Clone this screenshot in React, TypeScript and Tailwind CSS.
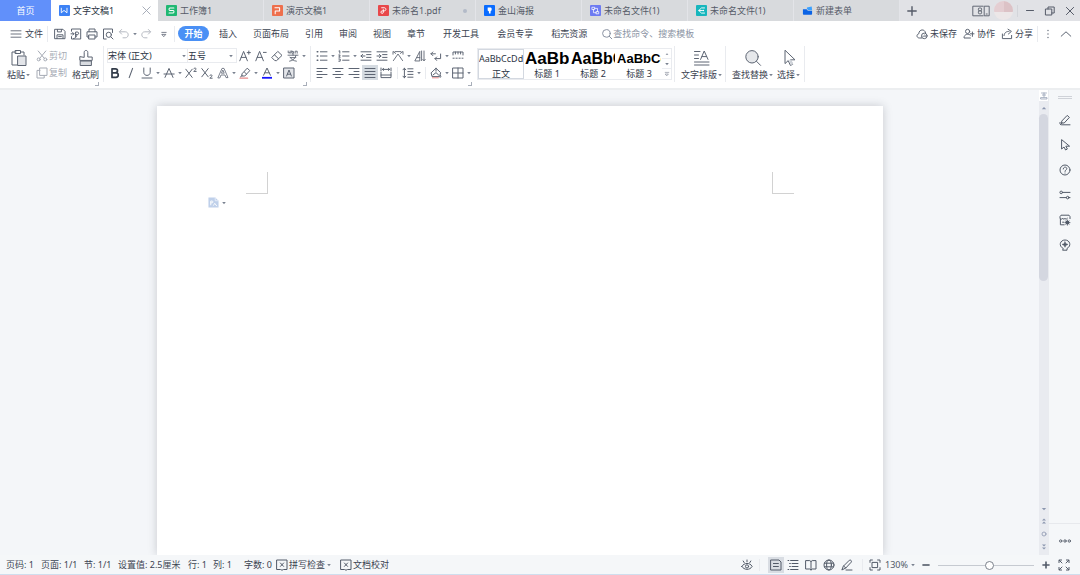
import React, { useState } from 'react';

type IconProps = { children: React.ReactNode; className?: string; box?: number };

function Icon({ children, className = 'size-3', box = 12 }: IconProps) {
  return (
    <svg
      aria-hidden="true"
      viewBox={`0 0 ${box} ${box}`}
      className={`shrink-0 ${className}`}
      fill="none"
      stroke="currentColor"
      strokeWidth="1"
      strokeLinecap="round"
      strokeLinejoin="round"
    >
      {children}
    </svg>
  );
}

function Caret() {
  return (
    <svg aria-hidden="true" viewBox="0 0 6 6" className="size-[6px] shrink-0 text-[#7a8290]">
      <path d="M1.2 2h3.6L3 4.2z" fill="currentColor" />
    </svg>
  );
}

function Divider({ className = 'h-4' }: { className?: string }) {
  return <span aria-hidden="true" className={`w-px shrink-0 bg-[#e9ebef] ${className}`} />;
}

/* ---------- title bar ---------- */

const tabs = [
  {
    name: '文字文稿1',
    icon: (
      <>
        <rect width="12" height="12" rx="1" fill="#3d82f5" stroke="none" />
        <path d="M2.5 3.5v5l3-2.6 3.2 2.6v-5" stroke="#fff" />
      </>
    ),
  },
  {
    name: '工作簿1',
    icon: (
      <>
        <rect width="12" height="12" rx="1" fill="#1fb873" stroke="none" />
        <path d="M8.6 3.2H4.2c-1.2 0-1.2 2.7 0 2.7h3.6c1.2 0 1.2 2.8 0 2.8H3.3" stroke="#fff" strokeWidth="1.1" />
      </>
    ),
  },
  {
    name: '演示文稿1',
    icon: (
      <>
        <rect width="12" height="12" rx="1" fill="#ee6f4c" stroke="none" />
        <path d="M3.5 9.5v-3h4.8V3H3.2" stroke="#fff" strokeWidth="1.1" />
      </>
    ),
  },
  {
    name: '未命名1.pdf',
    icon: (
      <>
        <rect width="12" height="12" rx="1" fill="#e8484a" stroke="none" />
        <path d="M4 3h2.8c2.4 0 2.4 3.4 0 3.4H4.6c-1.9 0-1.9 2.8 0 2.8.9 0 1.2-.6 1.2-1.4V5" stroke="#fff" />
      </>
    ),
  },
  {
    name: '金山海报',
    icon: (
      <>
        <rect width="12" height="12" rx="1" fill="#0a6cff" stroke="none" />
        <path d="M4 2.6h3.2c1.6 0 1.6 3.6 0 4.2v2.6H5.4V7.2L4 6z" fill="#fff" stroke="none" />
      </>
    ),
  },
  {
    name: '未命名文件(1)',
    icon: (
      <>
        <rect width="12" height="12" rx="1" fill="#6d7bf2" stroke="none" />
        <path d="M2.5 2.5h2.6v2.4H2.5zM6.9 7.2h2.6v2.4H6.9zM3.8 4.9v3.5h3.1M5.1 3.7h3.1v3.5" stroke="#fff" strokeWidth="0.8" />
      </>
    ),
  },
  {
    name: '未命名文件(1)',
    icon: (
      <>
        <rect width="12" height="12" rx="1" fill="#17b6bd" stroke="none" />
        <path d="M9.3 3.2H6L3 6l3 2.8h3.3M3 6h4" stroke="#fff" />
        <circle cx="8" cy="6" r=".9" fill="#fff" stroke="none" />
      </>
    ),
  },
  {
    name: '新建表单',
    icon: (
      <>
        <path d="M1 4.6h4l1.4 1.6H11v3.6a.9.9 0 0 1-.9.9H1.9a.9.9 0 0 1-.9-.9z" fill="#0b63e5" stroke="none" />
        <path d="M5.4 2.6 10.6 1.6l.4 4H6.8L5.4 4z" fill="#3aa0ff" stroke="none" />
      </>
    ),
  },
];

function TitleBar() {
  return (
    <header className="flex h-[21px] shrink-0 items-stretch bg-[#e1e2e6] text-[#555b68]">
      <button className="w-[51px] shrink-0 bg-[#6190fa] text-white">首页</button>
      <nav aria-label="文档标签" className="flex min-w-0">
        {tabs.map((tab, i) => (
          <div
            key={i}
            className={
              i === 0
                ? 'flex w-[107px] items-center bg-white pr-[6px] pl-2 text-[#2c3444]'
                : 'flex w-[106px] items-center border-r border-[#e3e4e8] bg-[#d8dadd] pr-1 pl-2'
            }
          >
            <button className="flex min-w-0 flex-1 items-center gap-[3px] whitespace-nowrap">
              <Icon className="size-[11px]">{tab.icon}</Icon>
              {tab.name}
            </button>
            {i === 0 && (
              <button aria-label="关闭标签" className="text-[#a0a6b4]">
                <Icon className="size-[11px]">
                  <path d="M2 2l8 8M10 2l-8 8" />
                </Icon>
              </button>
            )}
            {i === 3 && <span className="mr-1 size-1 rounded-full bg-[#b3bac8]" />}
          </div>
        ))}
      </nav>
      <button aria-label="新建标签" className="w-6 shrink-0 pl-[6px]">
        <Icon>
          <path d="M6 1.8v8.4M1.8 6h8.4" strokeWidth="1.4" />
        </Icon>
      </button>
      <div className="ml-auto flex shrink-0 items-center pr-1">
        <button aria-label="切换窗口" className="mr-1">
          <svg aria-hidden="true" viewBox="0 0 18 12" className="h-3 w-[18px]" fill="none" stroke="currentColor" strokeWidth="0.9">
            <path d="M11.5 1.2H.8v9.6h10.7M12.2 1.2h5v9.6h-5zM13.8 9h1.8" />
            <rect x="6.4" y="3" width="3.2" height="2.8" rx="1" />
            <rect x="6.4" y="5.8" width="3.2" height="3" rx="1" />
          </svg>
        </button>
        <button aria-label="账户" className="size-[19px] overflow-hidden rounded-full bg-[#e9e4e6]">
          <span className="flex h-[11px] w-full">
            <span className="w-1/2 bg-[#e4ced2]" />
            <span className="w-1/2 bg-[#dcc2c6]" />
          </span>
          <span className="block h-2 w-full bg-[#ece7e8]" />
        </button>
        <span className="ml-1 h-3 w-px bg-[#d3d5da]" />
        <div className="ml-[6px] flex gap-2">
          <button aria-label="最小化">
            <Icon><path d="M2.5 5.5h7" /></Icon>
          </button>
          <button aria-label="还原">
            <Icon><path d="M1.8 4h6v6h-6zM4 4V2h6.2v6H7.8" /></Icon>
          </button>
          <button aria-label="关闭">
            <Icon><path d="M2.4 2.4l7.2 7.2M9.6 2.4L2.4 9.6" /></Icon>
          </button>
        </div>
      </div>
    </header>
  );
}

/* ---------- menu row ---------- */

const menus = ['插入', '页面布局', '引用', '审阅', '视图', '章节'];
const extraMenus = ['开发工具', '会员专享', '稻壳资源'];

function MenuRow() {
  return (
    <div className="flex h-[25px] shrink-0 items-center bg-white pr-2 pl-[10px] whitespace-nowrap">
      <button className="flex items-center gap-[3px]">
        <Icon className="size-3 text-[#5d6573]">
          <path d="M1 2.8h10M1 6h10M1 9.2h10" strokeWidth="0.9" />
        </Icon>
        文件
      </button>
      <Divider className="ml-1 h-4" />
      <div className="ml-1 flex text-[#5d6573]">
        <button aria-label="保存" className="flex w-4 justify-center">
          <Icon><path d="M1 1.3h8L11 3.4v7.3H1zM3.4 1.5v2.4h4V1.5M3 10.5V6.8h6v3.7M4.6 8.6h2.8" /></Icon>
        </button>
        <button aria-label="输出为PDF" className="flex w-4 justify-center">
          <Icon><path d="M1.5 3.2V1h9.2v10H1.5V8.6M1 5.8h2.8M2.7 4.5L4 5.8 2.7 7.1M5.6 8.8V4h1.7c1.8 0 1.8 2.6 0 2.6H5.8M3.5 10.6c1.8-.3 3-1.5 3.3-3" /></Icon>
        </button>
        <button aria-label="打印" className="flex w-4 justify-center">
          <Icon><path d="M3 3.8V1h6v2.8M3 9H1V3.8h10V9H9M3 7h6v4H3z" /></Icon>
        </button>
        <button aria-label="打印预览" className="flex w-4 justify-center">
          <Icon><path d="M4.2 11H1.5V1h9v3.5" /><circle cx="6.8" cy="6.8" r="2.6" /><path d="M8.8 8.8l2.2 2.2" /></Icon>
        </button>
        <button aria-label="撤销" className="flex w-4 justify-center text-[#b6bac2]">
          <Icon><path d="M3.6 1.5L1.4 3.8l2.2 2.3M1.6 3.8h5.6c4 0 4 6 0 6H5" /></Icon>
        </button>
        <button aria-label="撤销列表" className="flex w-[6px] items-center"><Caret /></button>
        <button aria-label="恢复" className="flex w-4 justify-center text-[#b6bac2]">
          <Icon><path d="M8.4 1.5l2.2 2.3-2.2 2.3M10.4 3.8H4.8c-4 0-4 6 0 6H7" /></Icon>
        </button>
        <button aria-label="自定义快速访问" className="flex w-5 justify-center">
          <Icon><path d="M3.8 4.4h4.4M4.2 6.4h3.6L6 8.4z" strokeWidth="0.8" /></Icon>
        </button>
      </div>
      <Divider className="mr-[3px] h-4" />
      <button className="h-[15px] w-[31px] rounded-full bg-[#4a90f5] font-bold text-white">开始</button>
      <nav aria-label="功能区" className="ml-[10px] flex gap-4">
        {menus.map((m) => <button key={m}>{m}</button>)}
        {extraMenus.map((m) => <button key={m} className="ml-[2px]">{m}</button>)}
      </nav>
      <label className="ml-[14px] flex items-center text-[#8b93a3]">
        <Icon className="size-3"><circle cx="5.4" cy="5.4" r="3.8" /><path d="M8.2 8.2l2.6 2.6" /></Icon>
        <input aria-label="查找命令" placeholder="查找命令、搜索模板" className="w-24 bg-transparent outline-none placeholder:text-[#8b93a3]" />
      </label>
      <div className="ml-auto flex items-center gap-[6px]">
        <button className="flex items-center gap-[2px]">
          <Icon className="size-3 text-[#5d6573]"><path d="M5.6 10H3.4C.4 10 .2 6.2 2.8 5.8 3 .8 9 .8 9.5 4.6" /><circle cx="8.3" cy="7.9" r="2.8" /><path d="M6.8 8.2h3L8.6 7" strokeWidth="0.8" /></Icon>
          未保存
        </button>
        <button className="flex items-center gap-[2px]">
          <Icon className="size-3 text-[#5d6573]"><circle cx="4.6" cy="3.4" r="2.1" /><path d="M7.4 10H1c0-4.3 5-4.6 6.3-2.8M9.4 4v4.4M7.4 5.8h3.6" /></Icon>
          协作
        </button>
        <button className="flex items-center gap-[2px]">
          <Icon className="size-3 text-[#5d6573]"><path d="M1.4 6v4.6h9.2V7.4M3 7.6c.4-3.2 2.4-4.2 5-4.2M7 1.2l3.4 2.2L7.4 6" /></Icon>
          分享
        </button>
      </div>
      <Divider className="ml-1 h-4" />
      <button aria-label="更多" className="ml-1 text-[#5d6573]">
        <Icon><path d="M6 2.5v.1M6 6v.1M6 9.5v.1" strokeWidth="1.3" /></Icon>
      </button>
      <button aria-label="收起功能区" className="ml-[6px] text-[#5d6573]">
        <Icon><path d="M1.2 8.2L6 3.8l4.8 4.4" /></Icon>
      </button>
    </div>
  );
}

/* ---------- ribbon ---------- */

function Tool({ label, active, children }: { label: string; active?: boolean; children: React.ReactNode }) {
  return (
    <button
      aria-label={label}
      className={`flex h-[15px] w-4 shrink-0 items-center justify-center ${active ? 'bg-[#d5dbe1]' : ''}`}
    >
      <Icon>{children}</Icon>
    </button>
  );
}

function Drop({ label }: { label: string }) {
  return (
    <button aria-label={label} className="flex h-[15px] w-[6px] shrink-0 items-center">
      <Caret />
    </button>
  );
}

function Gap() {
  return (
    <span className="flex w-[6px] shrink-0 justify-center">
      <Divider className="h-3" />
    </span>
  );
}

function Corner({ label }: { label: string }) {
  return (
    <button aria-label={label} className="-ml-1 flex items-end self-end pb-[2px]">
      <span className="size-1 border-r border-b border-[#a8aeb9]" />
    </button>
  );
}

function BigTool({ label, caret, children }: { label: string; caret?: boolean; children: React.ReactNode }) {
  return (
    <button className="flex flex-col items-center gap-[3px] whitespace-nowrap">
      <Icon className="size-[18px] text-[#5d6573]" box={18}>{children}</Icon>
      <span className="flex items-center leading-[10px]">
        {label}
        {caret && <Caret />}
      </span>
    </button>
  );
}

const styles = [
  { name: '正文', sample: 'AaBbCcDd', look: 'text-[9px] justify-center' },
  { name: '标题 1', sample: 'AaBb', look: 'text-[17px] font-bold font-["Liberation_Sans",sans-serif] text-black' },
  { name: '标题 2', sample: 'AaBbC', look: 'text-[16px] font-bold font-["Liberation_Sans",sans-serif] text-black' },
  { name: '标题 3', sample: 'AaBbCc', look: 'text-[13px] font-bold font-["Liberation_Sans",sans-serif] text-black' },
];

function Ribbon() {
  return (
    <div className="flex h-[42px] shrink-0 bg-white text-[#5d6573]">
      <div className="flex items-start pt-[3px] pl-[7px] text-[#3b4351]">
        <BigTool label="粘贴" caret>
          <path d="M6 3H2v13h5M11 3h3v3M5.5 1.5h5v3h-5z" />
          <path d="M8 7h8v9.5H8z" fill="#e3e5e9" />
        </BigTool>
        <div className="ml-[5px] flex flex-col gap-[3px] text-[#a6abb5]">
          <button className="flex h-[14px] items-center gap-px">
            <Icon><path d="M2.2 1l6 7.2M9.8 1l-6 7.2" /><circle cx="2.7" cy="9.4" r="1.5" /><circle cx="9.3" cy="9.4" r="1.5" /></Icon>
            剪切
          </button>
          <button className="flex h-[14px] items-center gap-px">
            <Icon><path d="M4 1h7v7.4H4zM4 3.4H1V11h7.2V8.4" /></Icon>
            复制
          </button>
        </div>
        <div className="ml-[5px]">
          <BigTool label="格式刷">
            <path d="M3.6 12h10.8v4.5H3.6z" fill="#d9dce1" />
            <path d="M7.2 8V3.4c0-2.6 3.6-2.6 3.6 0V8h4.4v3.4H2.8V8z" />
          </BigTool>
        </div>
      </div>
      <Corner label="剪贴板设置" />
      <Divider className="ml-1 h-9" />

      <div className="flex flex-col gap-[2px] pt-[2px] pl-[3px]">
        <div className="flex items-center">
          <div className="flex h-[15px] border border-[#e9ebef] text-[#2c3444]">
            <span className="flex w-20 items-center border-r border-[#e9ebef]">
              <select aria-label="字体" className="w-[73px] appearance-none bg-transparent outline-none">
                <option>宋体 (正文)</option>
              </select>
              <Caret />
            </span>
            <span className="flex w-12 items-center">
              <select aria-label="字号" className="w-10 appearance-none bg-transparent outline-none">
                <option>五号</option>
              </select>
              <Caret />
            </span>
          </div>
          <Tool label="增大字号"><path d="M.8 10.8L4.6 1.4l3.8 9.4M2.2 7.4H7M8.2 2.6h3.2M9.8 1v3.2" /></Tool>
          <Tool label="减小字号"><path d="M.8 10.8L4.6 1.4l3.8 9.4M2.2 7.4H7M8.4 2.4h2.8" /></Tool>
          <Tool label="清除格式"><path d="M1 7.2L6.8 1.4l4.2 4-5.4 5.2H4.2zM3.4 4.8l4.4 4.2" /></Tool>
          <Tool label="拼音指南"><path d="M1.200 1v1.800h2V1M3.200 2.800v.4M4.800.8v2.400h1.800V1.600H4.800M8.200 3.200V1.200h2v2M1 5.200h10M6 3.800v1.400M3 7.200c1 2 3.400 3.600 6.400 4M9 5.400c-.6 3-3 5.200-6.400 5.800M3.400 7.600h5.400" strokeWidth="0.9" /></Tool>
          <Drop label="拼音选项" />
        </div>
        <div className="flex items-center">
          <Tool label="加粗"><path d="M3 1.800h3.400c2.800 0 2.800 4 0 4H3zM3 5.800h4c3 0 3 4.600 0 4.600H3z" strokeWidth="1.700" stroke="#333c4a" /></Tool>
          <Tool label="倾斜"><path d="M7.600 1.400L4.200 10.600" strokeWidth="1.100" /></Tool>
          <Tool label="下划线"><path d="M2.800 1v4.400c0 4 6.400 4 6.400 0V1M1 11h10" /></Tool>
          <Drop label="下划线选项" />
          <Tool label="删除线"><path d="M2 10.400L6 1.400l4 9M1 7h10.200" /></Tool>
          <Drop label="删除线选项" />
          <Tool label="上标"><path d="M.8 2.200l6.400 8.200M7.200 2.200L.8 10.400M8.800 1.800c.4-1.200 2.400-1 2.200.3-.1.8-1.600 1.500-2.200 2.300h2.400" /></Tool>
          <Tool label="下标"><path d="M.8 1.600l6.400 8.200M7.200 1.600L.8 9.800M8.800 8.600c.4-1.200 2.400-1 2.200.3-.1.8-1.600 1.500-2.200 2.300h2.400" /></Tool>
          <Tool label="文字效果"><path d="M1 10.600L5 1.400h2l4 9.200H9L8 8H4l-1 2.600zM4.800 6.200h2.400L6 3.400z" strokeWidth="0.8" /></Tool>
          <Drop label="文字效果选项" />
          <Tool label="突出显示"><path d="M3.200 6.600L8.200 1.200l2.600 2.400L5.800 9H3.200zM3.200 8.600L1.400 10M5.400 5l2.200 2.200" /><path d="M1 11.200h7.600" stroke="#e58a8a" strokeWidth="1.200" /></Tool>
          <Drop label="突出显示颜色" />
          <Tool label="字体颜色"><path d="M2.600 8.200L6 1l3.400 7.200M3.800 5.800h4.400" /><path d="M1 10.800h10" stroke="#1414ff" strokeWidth="1.800" strokeLinecap="butt" /></Tool>
          <Drop label="字体颜色选项" />
          <Tool label="字符底纹"><rect x="1" y="1" width="10" height="10" fill="#e3e5e9" /><path d="M3.600 9L6 3l2.400 6M4.400 7.200h3.200" /></Tool>
        </div>
      </div>
      <Corner label="字体设置" />
      <Divider className="ml-[3px] h-9" />

      <div className="flex flex-col gap-[2px] pt-[2px] pl-[3px]">
        <div className="flex">
          <Tool label="项目符号"><path d="M1.200 1.800h.6M1.200 6h.6M1.200 10.200h.6" strokeWidth="1.500" /><path d="M4.400 1.800H11M4.400 6H11M4.400 10.200H11" /></Tool>
          <Drop label="项目符号选项" />
          <Tool label="编号"><path d="M1 1l.8-.2v2.400M.8 5h1.400L.8 7.200h1.400M.8 9h1.400v2.200H.8M4.600 1.800H11M4.600 6H11M4.600 10.200H11" /></Tool>
          <Drop label="编号选项" />
          <Tool label="减少缩进"><path d="M1 1.800h10M6.600 4.600H11M6.600 7.400H11M1 10.200h10M1 6h4M2.600 4.400L1 6l1.600 1.600" /></Tool>
          <Tool label="增加缩进"><path d="M1 1.800h10M6.600 4.600H11M6.600 7.400H11M1 10.200h10M1 6h4M3.400 4.400L5 6 3.400 7.600" /></Tool>
          <Tool label="中文版式"><path d="M3 1.600h6M1.400 10.600L6 4l4.600 6.600M1 4.200V1.400l2.600 2M11 4.200V1.400l-2.600 2" strokeWidth="0.9" /></Tool>
          <Drop label="中文版式选项" />
          <Tool label="排序"><path d="M1 10.600L5.800 1.400v9.200zM3 7.600h2.800M7.600 1v9.600M10 1v9.600M8.800 9.400l1.200 1.400 1.200-1.400" strokeWidth="0.9" /></Tool>
          <Tool label="显示标记"><path d="M1 3.800h4.400M2.800 2L1 3.800l1.800 1.800M10.600 4v4.600H5M6.600 7L5 8.600l1.600 1.800" /></Tool>
          <Drop label="显示标记选项" />
          <Tool label="制表位"><path d="M1 5V2h10v3M3.400 2v2M6 2v2M8.600 2v2M1 8.200h1.200M4 8.200h1.200M7 8.200h1.200M10 8.200h1" /></Tool>
        </div>
        <div className="flex items-center">
          <Tool label="左对齐"><path d="M1 1.500h10M1 4.500h5M1 7.500h10M1 10.500h5" /></Tool>
          <Tool label="居中"><path d="M1 1.500h10M3.600 4.500h4.800M1 7.500h10M3.600 10.500h4.800" /></Tool>
          <Tool label="右对齐"><path d="M1 1.500h10M6 4.500h5M1 7.500h10M6 10.500h5" /></Tool>
          <Tool label="两端对齐" active><path d="M1 1.500h10M1 4.500h10M1 7.500h10M1 10.500h10" /></Tool>
          <Tool label="分散对齐"><path d="M1 1v3M11 1v3M2.400 2.400h7.200M3.600 1.400l-1.200 1 1.200 1M8.400 1.400l1.200 1-1.200 1M1 5.400v5.200h10V5.400M1 8h10" /></Tool>
          <Gap />
          <Tool label="行距"><path d="M2.400 1.200v9.600M1 2.800l1.400-1.600 1.400 1.600M1 9.200l1.400 1.600 1.400-1.600M5.800 1.800H11M5.800 4.600H11M5.800 7.400H11M5.800 10.200H11" /></Tool>
          <Drop label="行距选项" />
          <Gap />
          <Tool label="底纹颜色"><path d="M1.400 5.600L6 1.200l4.600 4.400-1 4H2.400zM6 1.200v3M10.400 8.400c.8 1.200.6 2-.2 2" /><path d="M3 8l3-2.400L8.600 8" /><path d="M2.400 10.800h6" stroke="#e58a8a" /></Tool>
          <Drop label="底纹颜色选项" />
          <Tool label="边框"><path d="M1 1h10v10H1zM6 1v10M1 6h10" /></Tool>
          <Drop label="边框选项" />
        </div>
      </div>
      <Corner label="段落设置" />

      <div className="mt-[2px] ml-[5px] flex h-8 border border-[#e9ebef]">
        {styles.map((s, i) => (
          <button
            key={s.name}
            className={`flex w-[46px] flex-col overflow-hidden text-[#2c3444] ${i === 0 ? 'outline outline-1 -outline-offset-1 outline-[#d3d8e0]' : 'px-px'}`}
          >
            <span className={`flex h-5 w-full items-center overflow-hidden leading-5 ${s.look}`}>{s.sample}</span>
            <span className="w-full text-center leading-[10px]">{s.name}</span>
          </button>
        ))}
        <div className="flex w-[9px] flex-col text-[#7a8290]">
          <button aria-label="上一行" className="flex h-[10px] items-center justify-center border-b border-[#eceef2]">
            <Icon className="size-[6px]" box={6}><path d="M1.600 3.800L3 2.200l1.400 1.600z" fill="currentColor" stroke="none" /></Icon>
          </button>
          <button aria-label="下一行" className="flex h-[10px] items-center justify-center border-b border-[#eceef2]">
            <Caret />
          </button>
          <button aria-label="更多样式" className="flex h-[10px] items-center justify-center">
            <Icon className="size-[6px]" box={6}><path d="M1.200 1.400h3.600M1.600 3h2.800L3 4.600z" strokeWidth="0.6" /></Icon>
          </button>
        </div>
      </div>

      <Divider className="ml-[2px] h-9" />
      <div className="flex items-start pt-[3px] pl-[6px] text-[#3b4351]">
        <BigTool label="文字排版" caret>
          <path d="M1.500 2.500h5.500M1.500 6h4M1.500 9.500h4M1.500 13h14.500M1.500 16h14.500M7.600 10.400l3.600-8.400 3.800 8.400M9 7.600h4.600" />
        </BigTool>
      </div>
      <Divider className="ml-[2px] h-9" />
      <div className="flex items-start gap-[3px] pt-[3px] pl-[6px] text-[#3b4351]">
        <BigTool label="查找替换" caret>
          <circle cx="8" cy="7.800" r="6.200" fill="#e6e8eb" />
          <path d="M12.600 12.400l4 4" />
        </BigTool>
        <BigTool label="选择" caret>
          <path d="M5 1.600v13l3.200-3 2.200 4.800 2.200-1-2.200-4.600h4.200z" fill="#fff" />
          <path d="M9 11.400l2.200-1 2 4.600-2.200 1z" fill="#cfd3d9" stroke="none" />
        </BigTool>
      </div>
      <Divider className="ml-[3px] h-9" />
    </div>
  );
}

/* ---------- workspace ---------- */

function Page() {
  return (
    <main className="flex min-w-0 flex-1 justify-center overflow-hidden pt-4">
      <article className="w-[726px] bg-white pt-[66px] shadow-[0_0_9px_rgba(40,45,60,0.22)]">
        <div className="flex justify-between px-[89px]">
          <span className="size-[22px] border-r border-b border-[#d2d2d2]" />
          <span className="size-[22px] border-b border-l border-[#d2d2d2]" />
        </div>
        <button aria-label="文档选项" className="mt-[3px] ml-[51px] flex items-center gap-[2px]">
          <Icon className="size-[11px]">
            <path d="M.5.5h7.400l3.600 3.600v7.400H.5z" fill="#bfd0ea" stroke="none" />
            <path d="M7.900.5v3.600h3.600" stroke="#e8eff9" />
            <path d="M3 8.600V4.400h1.400c1.400 0 1.400 2 0 2H3M5.600 9.200l1.600-1.600M7.400 7l2 2.600" stroke="#fff" strokeWidth="1" />
          </Icon>
          <Caret />
        </button>
      </article>
    </main>
  );
}

function ScrollColumn() {
  return (
    <div className="flex w-[9px] shrink-0 flex-col items-center bg-[#e9ebf0] text-[#8b96ae]">
      <button aria-label="标尺" className="flex h-[11px] w-full items-center justify-center bg-white">
        <Icon className="size-2" box={8}><path d="M1.500 1h5M4 1v4M2.400 3h3.200M1 5.600h6v1.400H1z" strokeWidth="0.7" /></Icon>
      </button>
      <button aria-label="向上滚动" className="flex h-[13px] w-full items-center justify-center">
        <Icon className="size-2" box={8}><path d="M1.800 5.200L4 3l2.200 2.200z" fill="currentColor" stroke="none" /></Icon>
      </button>
      <div className="w-full min-h-0 flex-1">
        <div className="h-[43%] w-full rounded-full bg-[#d4d7e0]" />
      </div>
      <button aria-label="向下滚动" className="flex h-[11px] w-full items-center justify-center">
        <Icon className="size-2" box={8}><path d="M1.800 3L4 5.200 6.200 3z" fill="currentColor" stroke="none" /></Icon>
      </button>
      <button aria-label="上一页" className="flex h-[13px] w-full items-center justify-center">
        <Icon className="size-2" box={8}><path d="M2 3.600L4 1.600l2 2zM2 6.600l2-2 2 2z" fill="currentColor" stroke="none" /></Icon>
      </button>
      <button aria-label="浏览对象" className="flex h-[13px] w-full items-center justify-center">
        <Icon className="size-2" box={8}><circle cx="4" cy="4" r="2" strokeWidth="0.8" /></Icon>
      </button>
      <button aria-label="下一页" className="mb-[2px] flex h-[13px] w-full items-center justify-center">
        <Icon className="size-2" box={8}><path d="M2 1.600h4l-2 2zM2 4.600h4l-2 2z" fill="currentColor" stroke="none" /></Icon>
      </button>
    </div>
  );
}

const sideTools = [
  { name: '编辑', icon: <path d="M3 6.800L8.200 1.400l2.200 2L5.200 9H3zM1 8.400c-.4 1.400.2 2.400 1.600 2.400H11M3 9l-1.400 1.600" /> },
  { name: '选择', icon: <path d="M2.600 1v9l2.400-2 1.600 3 1.800-1-1.600-2.800h3.400z" /> },
  { name: '帮助', icon: <><circle cx="6" cy="6" r="5" /><path d="M4.200 5c0-2.600 3.800-2.400 3.600-.2C7.600 6 6 6 6 7.400M6 9v.1" /></> },
  { name: '设置', icon: <><circle cx="2.200" cy="3.400" r="1.300" /><path d="M3.500 3.400H11M1 8.600h6.400M10 8.600h1" /><circle cx="8.700" cy="8.600" r="1.300" /></> },
  { name: '素材', icon: <><path d="M11 4.600V2.600L10 1.200H2L1 2.600v2c1.400 1 2.600.4 2.600-.4 0 1.200 2.400 1.200 2.400 0 0 1.200 2.400 1.200 2.400 0M1.400 5.200v5.600h3.800M3.600 8.200h1.200" /><circle cx="8.400" cy="8.600" r="2" fill="currentColor" stroke="none" /><path d="M8.400 6v5.200M5.900 8.600H11M6.700 6.900l3.400 3.400M10.100 6.900l-3.400 3.400" strokeWidth="0.8" /></> },
  { name: '定位', icon: <><path d="M4 9.400C-.8 7 1 1 6 1s6.800 6 2 8.400v1.800H4z" /><path d="M6 2.800l1 1.900 2 .7-2 .9-1 2-1-2-2-.9 2-.7z" fill="currentColor" strokeWidth="0.500" /></> },
];

function SideBar() {
  return (
    <aside className="flex w-8 shrink-0 flex-col items-center border-l border-[#e9ebef] bg-[#f5f7f9] text-[#525a68]">
      <span className="mt-[6px] h-[3px] w-[14px] border-y border-[#cfd2d8]" />
      <div className="mt-2 flex flex-col">
        {sideTools.map((t) => (
          <button key={t.name} aria-label={t.name} className="flex h-[25px] w-6 items-center justify-center">
            <Icon>{t.icon}</Icon>
          </button>
        ))}
      </div>
      <button aria-label="更多工具" className="mt-auto flex h-8 w-full items-center justify-center border-t border-[#e7e9ed]">
        <Icon>
          <g strokeWidth="0.900">
            <circle cx="1.700" cy="7" r="1.200" /><circle cx="6" cy="7" r="1.200" /><circle cx="10.300" cy="7" r="1.200" />
          </g>
        </Icon>
      </button>
    </aside>
  );
}

/* ---------- status bar ---------- */

function CheckIcon() {
  return (
    <Icon className="size-3 text-[#525a68]">
      <path d="M1 1h10v9.500H7.500L6 11.200 4.500 10.500H1zM4.400 4l3.200 3.400M7.600 4L4.400 7.400" />
    </Icon>
  );
}

function StatusBar() {
  const [zoom, setZoom] = useState(54);
  return (
    <footer className="flex h-5 shrink-0 items-center border-b border-[#cfdeee] bg-[#f5f7f9] pt-px pl-[6px] whitespace-nowrap text-[#3b4351]">
      <span className="w-[35px]">页码: 1</span>
      <span className="w-[43px]">页面: 1/1</span>
      <span className="w-[34px]">节: 1/1</span>
      <span className="w-[70px]">设置值: 2.5厘米</span>
      <span className="w-[25px]">行: 1</span>
      <span className="w-[31px]">列: 1</span>
      <span className="w-8">字数: 0</span>
      <button className="flex items-center gap-px"><CheckIcon />拼写检查<Caret /></button>
      <button className="ml-2 flex items-center gap-px"><CheckIcon />文档校对</button>

      <div className="ml-auto flex items-center pr-[10px] text-[#525a68]">
        <button aria-label="护眼模式" className="mr-[6px]">
          <Icon><path d="M.8 7.400c2.400-4 8-4 10.400 0-2.400 4-8 4-10.400 0zM6 1v1.800M2.200 2l1 1.600M9.800 2l-1 1.600" /><circle cx="6" cy="7.400" r="1.600" /></Icon>
        </button>
        <Divider className="mr-2 h-3" />
        <button aria-label="页面视图" className="flex h-4 w-4 items-center justify-center bg-[#d9dde3]">
          <Icon><path d="M1 1h8l2 2v8H1zM3.400 4.500h5M3.400 7.500h5" /></Icon>
        </button>
        <button aria-label="大纲" className="flex w-[18px] justify-center">
          <Icon><path d="M1 1.500h.8M3.600 1.500H11M2.600 4.500h.8M5 4.500h6M2.600 7.500h.8M5 7.500h6M1 10.500h.8M3.600 10.500H11" /></Icon>
        </button>
        <button aria-label="阅读版式" className="flex w-[18px] justify-center">
          <Icon><path d="M1 1.600h3.800L6 2.600l1.200-1H11v8.400H7.200L6 11l-1.200-1H1zM6 2.600V11" /></Icon>
        </button>
        <button aria-label="Web版式" className="flex w-[18px] justify-center">
          <Icon><circle cx="6" cy="6" r="5" /><ellipse cx="6" cy="6" rx="2.400" ry="5" /><path d="M1.400 4.200h9.200M1.400 7.800h9.200" /></Icon>
        </button>
        <button aria-label="写作模式" className="flex w-[18px] justify-center">
          <Icon><path d="M2.600 7L8.400 1.200c1.400-.6 2.600.8 1.800 2L4.800 9l-3.600 1.800zM2.600 7l2.200 2M5 11h6" /></Icon>
        </button>
        <Divider className="mx-[6px] h-3" />
        <button aria-label="最佳显示比例" className="mr-1">
          <Icon><path d="M1 3.400V1h2.400M8.600 1H11v2.400M11 8.600V11H8.600M3.400 11H1V8.600M3.400 3.400h5.200v5.200H3.400z" /></Icon>
        </button>
        <button className="flex w-[35px] items-center gap-[2px]">130%<Caret /></button>
        <button aria-label="缩小" className="mr-[6px]">
          <Icon><path d="M2.400 6h7.200" strokeWidth="1.600" strokeLinecap="butt" /></Icon>
        </button>
        <input
          type="range"
          aria-label="显示比例"
          value={zoom}
          onChange={(e) => setZoom(Number(e.target.value))}
          className="h-3 w-24 appearance-none bg-transparent [&::-webkit-slider-runnable-track]:h-px [&::-webkit-slider-runnable-track]:bg-[#c6cad1] [&::-webkit-slider-thumb]:-mt-1 [&::-webkit-slider-thumb]:size-[9px] [&::-webkit-slider-thumb]:appearance-none [&::-webkit-slider-thumb]:rounded-full [&::-webkit-slider-thumb]:border [&::-webkit-slider-thumb]:border-[#7b818c] [&::-webkit-slider-thumb]:bg-white"
        />
        <button aria-label="放大" className="ml-[6px]">
          <Icon><path d="M2.400 6h7.200M6 2.400v7.200" strokeWidth="1.600" strokeLinecap="butt" /></Icon>
        </button>
        <button aria-label="全屏" className="ml-[6px]">
          <Icon><path d="M1 3.600V1h2.600M1.200 1.200L4 4M8.400 1H11v2.600M10.800 1.200L8 4M11 8.400V11H8.400M10.800 10.800L8 8M3.600 11H1V8.400M1.200 10.800L4 8" /></Icon>
        </button>
      </div>
    </footer>
  );
}

export default function App() {
  return (
    <div className="flex h-screen flex-col overflow-hidden bg-[#f4f6f9] font-['Noto_Sans','Noto_Sans_CJK_SC',sans-serif] text-[9px] leading-3 text-[#3b4351]">
      <TitleBar />
      <MenuRow />
      <Ribbon />
      <div className="flex min-h-0 flex-1 border-t-2 border-[#eceef0]">
        <Page />
        <ScrollColumn />
        <SideBar />
      </div>
      <StatusBar />
    </div>
  );
}
